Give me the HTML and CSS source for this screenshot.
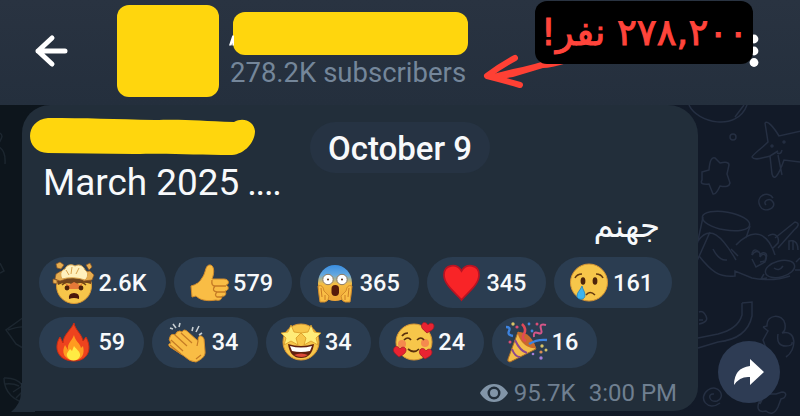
FILE: index.html
```html
<!DOCTYPE html>
<html lang="en">
<head>
    <meta charset="UTF-8" />
    <meta name="viewport" content="width=device-width, initial-scale=1" />
    <title>Channel</title>
    <link rel="stylesheet" href="styles.css">
</head>
<body>

    <header class="topbar">
        <svg class="back" viewBox="0 0 36 36"><path d="M31 18H4M18 5L4 18l14 13" /></svg>
        <div class="avatar"></div>
        <div class="channel">
            <div class="channel-name"><svg class="name-edge" viewBox="0 0 6 12"><path d="M0 12L4 0h2v12H4V9L3 12z" /></svg></div>
            <div class="subscribers">278.2K subscribers</div>
        </div>
        <svg class="menu" viewBox="0 0 10 34"><circle cx="5" cy="5" r="4.4" /><circle cx="5" cy="17" r="4.4" /><circle cx="5" cy="28.5" r="4.4" /></svg>
        <svg class="arrow" viewBox="0 0 90 36"><path class="shaft" d="M6 21L30 15Q55 10 66 5L84 9Q68 14 60 14L30 23 12 26z" /><path class="head" d="M32 4Q17 12 4 22Q20 26 37 31" /></svg>
        <div class="callout" dir="rtl" lang="fa">۲۷۸,۲۰۰ نفر!</div>
    </header>

    <main class="chat">
        <svg class="wallpaper" viewBox="0 105 800 311">
            <path d="M689 105c8 18 48 27 58 0M735 117l9-12M702 172l7-2q1-14 6-12l5 5q9-2 9 2l-2 9 3 9q-1 5-10 3-4 9-7 8l-4-10q-10 1-7-4z" />
            <circle cx="733" cy="137" r="3" />
            <path d="M765 123c2-3 8 3 14 13l22-5M765 123l3 19c-6 6-16 13-16 15 2 4 10 1 18-1l2 18c2 7 6 3 12-14l17 2M770 156l8-5M782 175l-4-20M782 150q-1 5-5 3" />
            <circle cx="772" cy="146" r="1" /><circle cx="784" cy="142" r="1" />
            <path d="M773 198c-5-8-18-2-13 8 4 8 17 2 13-4-3-5-11-1-7 3" />
            <ellipse cx="726" cy="221" rx="24" ry="9" transform="rotate(10 726 221)" />
            <path d="M703 217l-6 28M750 226l-4 12M698 241c12-17 24-5 38 19M710 232l-13 29M736 245c18-19 32-12 39 10M768 236c6-4 12 0 10 7l-5 5M775 238l20-16c6 1 2 6-1 8l-16 18M752 255c0-8 8-5 8 0 4-5 9-1 5 5M789 250v-9c8-2 9 5 9 9M793 250v-10" />
            <path d="M699 256c12 15 20 22 36 20v-5l17 7q21 4 38-2M713 249q6 12 14 11M731 249l7 7M752 255c4-6 10-3 8 2 4-6 8-1 5 5l-9 5-4-8" />
            <ellipse cx="780" cy="269" rx="15" ry="8" transform="rotate(-15 780 269)" /><path d="M774 268q5 4 9-2M764 274l-3 5 6-1M765 261l-5 1M796 262l4-4M795 270h5" />
            <path d="M699 312q4-2 7 4t-7 8M699 320h4M742 303l10-1v14q-5 23-34 26l-20 6M742 303v12q-4 14-24 19l-20 4" />
            <path d="M763 327l4-1c-1-12 16-13 18-2q1 7-3 9c15-4 15 17 4 24M763 327l5 4-5 9 3 8M778 334q-2 12 8 12 7 0 6-4M720 403c-12 9-23-5-12-13 10-7 19 7 9 11-8 2-10-8-3-7M760 404l5-10 11 0 6-2c6 0 4 6-1 7l-3 8q-5 10-12 4c-8 2-10-3-6-11z" />
            <path class="faint" d="M0 133c6 4-4 10-1 14q7 4 6 17M0 263l4 8-4 2M24 317L6 330l10 14 12 7M8 330q15-5 18-2M4 378c14-1 23 8 26 26-16-2-26-12-26-26M5 384q8-1 14 2M13 392l9-6M16 398l9-9" />
        </svg>

        <article class="bubble">
            <svg class="marker" viewBox="0 0 226 40"><path d="M18 0C55 0 85 1 125 2 155 1 170 3 204 4c9-5 20-1 21 9 0 11-10 23-23 24C165 37 145 35 104 36L18 35C-6 34-6 2 18 0z" /></svg>
            <p class="line">March 2025 <span class="dots">....</span></p>
            <p class="line-fa" dir="rtl" lang="fa">جهنم</p>

            <div class="reactions">
                <div class="reaction">
                    <svg viewBox="0 0 44 44">
                        <circle class="face" cx="22" cy="25" r="17.5" />
                        <path fill="#71451e" d="M5 20q4-5 34-2v5q-9-3-17 1-9-4-16 0z" />
                        <path fill="#e6ad50" stroke="#8b5424" stroke-width=".7" d="M4 13l5-3 5 2v6l-6 2-5-2zM31 11l7-1 4 4-2 5-9 1zM4 3l4-2 4 3-3 4-4-1zM34 4l4-2 2 4-3 3zM1 18l4 1v4l-4-1z" />
                        <path fill="#fff0bd" stroke="#d9a34d" d="M10 18c-3-6 0-9 3-10 2-5 7-5 10-3 5-3 9 1 10 4 4 2 3 8 0 10q-12-4-23-1z" />
                        <path fill="none" stroke="#d9a34d" d="M14 9l3 5M20 6l-1 7M27 7l-3 6" />
                        <path fill="#e57938" d="M13 22l4 2 5-3 6 3 3-3-3 7H16z" />
                        <circle class="dark" cx="15" cy="27" r="2.4" /><circle class="dark" cx="29" cy="27" r="2.4" />
                        <path fill="#4a170b" d="M17 38q-1-6 5-6t5 6q-5-2-10 0z" /><path fill="none" stroke="#744515" stroke-width="1.4" d="M10 24q2-2 5-3M34 24q-2-2-5-3" />
                    </svg>
                    <span>2.6K</span>
                </div>
                <div class="reaction">
                    <svg viewBox="0 0 44 44">
                        <path class="hand" d="M4 25q8-2 11-8c4-5 3-12 7-13 5-1 6 7 3 14h12c5 0 6 5 2 6 4 2 2 6-1 6 2 3 0 6-3 5 0 4-3 5-6 4-11 2-17-1-20-4L5 36z" />
                        <path fill="none" stroke="#c57b25" stroke-width="1.3" d="M25 19q-1 6 3 6h11M28 25q-4 5 2 6h8M30 31q-3 3 0 5h5" />
                    </svg>
                    <span>579</span>
                </div>
                <div class="reaction">
                    <svg viewBox="0 0 44 44">
                        <defs><linearGradient id="cold" x2="0" y2="1"><stop stop-color="#398ee1" /><stop offset=".28" stop-color="#65a8df" /><stop offset=".52" stop-color="#f5bd42" /><stop offset="1" stop-color="#efa536" /></linearGradient></defs>
                        <ellipse cx="22" cy="22" rx="17" ry="18" fill="url(#cold)" />
                        <circle fill="#fff" stroke="#8d795f" cx="15" cy="18.500" r="5.200" /><circle fill="#fff" stroke="#8d795f" cx="29" cy="18.500" r="5.200" />
                        <circle class="dark" cx="15" cy="18.500" r="1" /><circle class="dark" cx="29" cy="18.500" r="1" />
                        <rect fill="#571b0b" x="18.500" y="24" width="7.500" height="11" rx="3.700" />
                        <path class="hand" d="M5 25q5-2 6 5l5 5q0 5-4 6H7l-1-7zM39 25q-5-2-6 5l-5 5q0 5 4 6h5l1-7z" /><path fill="none" stroke="#ca7c24" d="M8 27l1 9M36 27l-1 9M12 34v5M32 34v5" />
                    </svg>
                    <span>365</span>
                </div>
                <div class="reaction">
                    <svg viewBox="0 0 44 44"><path fill="#f82427" stroke="#b91322" stroke-width="1.700" d="M21.500 39C16 32 4 24 4 14 4 3 17 2 21.500 10 26 2 39 3 39 14c0 10-12 18-17.500 25z" /></svg>
                    <span>345</span>
                </div>
                <div class="reaction">
                    <svg viewBox="0 0 44 44">
                        <circle class="face" cx="22" cy="21.500" r="18.500" />
                        <ellipse class="dark" cx="16" cy="20" rx="2.400" ry="3.800" /><ellipse class="dark" cx="28" cy="20" rx="2.400" ry="3.800" />
                        <path fill="none" stroke="#64390f" stroke-width="1.600" d="M8 17q2-4 7-4M36 17q-2-4-7-4M19 34q4-5 9 0" />
                        <path fill="#3eb4ed" stroke="#1d82bf" stroke-width=".8" d="M15 25c-2 5-5 6-5 10s8 5 8-1c0-3-2-5-3-9z" />
                    </svg>
                    <span>161</span>
                </div>
                <div class="reaction">
                    <svg viewBox="0 0 44 44">
                        <path fill="#ee431e" stroke="#c92b13" d="M22 3c1 7 8 11 9 18l3-4c7 13 1 24-12 24C6 41 1 28 8 17l3 6c0-8 8-13 11-20z" />
                        <path fill="#ff9b20" d="M22 15c1 6 6 8 7 13l2-2c2 8-1 14-9 14-10 0-13-8-9-15l3 5c-1-7 4-9 6-15z" />
                        <path fill="#ffeb43" d="M22 26c2 3 7 6 6 10-2 6-11 6-13 0-1-3 2-5 3-7l2 2z" />
                    </svg>
                    <span>59</span>
                </div>
                <div class="reaction">
                    <svg viewBox="0 0 44 44">
                        <path class="hand" d="M5 17q1-4 5-2l2-3q3-2 5 0 2-4 6 0l10 9c0-7 4-6 6-2l1 12c1 6-5 9-9 11q-6 0-12-6L5 27q-3-3 1-4-3-4-1-6z" />
                        <path fill="none" stroke="#c57b25" stroke-width="1.200" d="M10 15l12 11M6 20l12 11M5 25l11 9M16 13l11 10M33 21l-1 5M36 35l-5 4" />
                        <path fill="none" stroke="#c7ced2" stroke-width="1.600" d="M5 8l3 1M8 4l3 4M15 3l-1 4M28 7l-1 4M34 6l-3 6M37 13l-3 2" />
                    </svg>
                    <span>34</span>
                </div>
                <div class="reaction">
                    <svg viewBox="0 0 44 44">
                        <circle class="face" cx="22" cy="22" r="18" />
                        <path fill="#60200e" d="M9 24q13 4 26 0-2 14-13 14T9 24z" /><path fill="#fff" d="M11 26q11 3 22 0l-2 5q-9 2-18 0z" /><path fill="#dc4938" d="M15 35q7-3 14 0-6 4-14 0z" />
                        <path id="star" fill="#ffec78" stroke="#d89924" stroke-width=".8" d="M12 5l3 7 7 1-5 5 2 7-7-4-7 4 2-7-5-5 7-1z" /><use href="#star" x="20" />
                    </svg>
                    <span>34</span>
                </div>
                <div class="reaction">
                    <svg viewBox="0 0 44 44">
                        <circle class="face" cx="22" cy="22" r="18" />
                        <circle fill="#f58a4e" cx="10" cy="24" r="4" /><circle fill="#f58a4e" cx="33" cy="23" r="4" />
                        <path fill="none" stroke="#59300d" stroke-width="1.700" d="M12 20q4-4 7 0M25 20q4-4 7 0M16 29q6 5 11 0M10 16q2-3 6-3" />
                        <path id="love" fill="#e92331" stroke="#a51924" stroke-width=".8" d="M35 13c-3-3-7-5-5-9 2-3 5-1 6 1 2-3 6-2 6 1 0 4-4 5-7 7z" /><use href="#love" x="-28" y="24" /><use href="#love" x="-2" y="26" />
                    </svg>
                    <span>24</span>
                </div>
                <div class="reaction">
                    <svg viewBox="0 0 44 44">
                        <path fill="#f3bd49" stroke="#a86b28" d="M3 39l10-27q14 4 18 17L5 42q-3 0-2-3z" /><path fill="#c76a2c" d="M13 12q13 0 18 16-8 1-14-6-5-7-4-10z" />
                        <path fill="none" stroke="#8b478d" stroke-width="2" d="M10 20q5 11 12 13M7 29q3 8 8 8" />
                        <path fill="none" stroke="#e24957" stroke-width="2.500" d="M17 4q5 5 2 10t2 7" /><path fill="none" stroke="#3d83df" stroke-width="2.300" d="M24 24q8-5 18-4M1 7q5 0 3 4t4 5" /><path fill="none" stroke="#d45688" stroke-width="2" d="M29 17q-1-6 4-4t3-4 5-4" />
                        <g fill="#d94d75"><circle cx="12" cy="7" r="1.600" /><circle cx="32" cy="4" r="1.500" /><circle cx="5" cy="22" r="1.500" /></g><g fill="#d8c467"><circle cx="8" cy="4" r="1.700" /><circle cx="37" cy="26" r="1.700" /><circle cx="41" cy="30" r="1.500" /></g><g fill="#a47ed8"><circle cx="36" cy="38" r="1.700" /><circle cx="28" cy="34" r="1.300" /></g><g fill="#4386df"><circle cx="24" cy="4" r="1.400" /><circle cx="27" cy="11" r="1.400" /></g><circle fill="#d98f53" cx="36" cy="32" r="1.600" />
                    </svg>
                    <span>16</span>
                </div>
            </div>

            <div class="meta">
                <svg viewBox="0 0 28 20"><path fill-rule="evenodd" d="M14 1C7 1 2 6 0 10c2 4 7 9 14 9s12-5 14-9C26 6 21 1 14 1zm0 2.500a6.500 6.500 0 1 1 0 13 6.500 6.500 0 0 1 0-13z" /><circle cx="14" cy="10" r="4" /></svg>
                <span>95.7K</span>
                <time>3:00 PM</time>
            </div>
        </article>

        <svg class="tail" viewBox="0 0 24 30"><path d="M10 0h14v29H0q10-8 10-20z" /></svg>
        <div class="date">October 9</div>
        <div class="share"><svg viewBox="0 0 32 28"><path d="M17 1l14 13-14 13v-8Q7 18 1 27 1 10 17 8z" /></svg></div>
    </main>

</body>
</html>
```
FILE: styles.css
```css
* {
    box-sizing: border-box;
}

body {
    margin: 0;
    height: 416px;
    overflow: hidden;
    font-family: Roboto, "DejaVu Sans", sans-serif;
    background: #121a28;
    color: #f7f9fb;
}

svg {
    display: block;
    flex: none;
}

.topbar {
    position: relative;
    display: flex;
    height: 105px;
    padding: 5px 41px 0 34px;
    background: linear-gradient(#293341, #242f3d);
}

.back {
    width: 36px;
    height: 36px;
    margin-top: 28px;
    fill: none;
    stroke: #fff;
    stroke-width: 5;
    stroke-linecap: round;
    stroke-linejoin: round;
}

.avatar {
    width: 102px;
    height: 92px;
    margin-left: 47px;
    border-radius: 12px;
    background: #ffd60d;
}

.channel {
    margin-left: 10px;
    padding-top: 7px;
}

.channel-name {
    width: 235px;
    height: 43px;
    margin-left: 4px;
    border-radius: 12px;
    background: #ffd60d;
}

.name-edge {
    position: absolute;
    left: 229px;
    top: 35px;
    width: 5px;
    height: 11px;
    fill: #fff;
}

.subscribers {
    margin: 2px 0 0 1px;
    font-size: 27.5px;
    line-height: 32px;
    white-space: nowrap;
    color: #74869a;
}

.menu {
    width: 10px;
    height: 34px;
    margin: 29px 0 0 auto;
    fill: #fff;
}

.arrow {
    position: absolute;
    left: 483px;
    top: 54px;
    width: 90px;
    height: 36px;
}

.shaft {
    fill: #ff4034;
}

.head {
    fill: none;
    stroke: #ff4034;
    stroke-width: 6;
    stroke-linecap: round;
    stroke-linejoin: round;
}

.callout {
    position: absolute;
    left: 535px;
    top: 1px;
    width: 218px;
    height: 63px;
    padding-right: 5px;
    border-radius: 12px;
    font: 37px/64px "DejaVu Sans", sans-serif;
    white-space: nowrap;
    background: #000;
    color: #ff443b;
    -webkit-text-stroke: 1px #ff443b;
}

.chat {
    position: relative;
    height: 311px;
    background: linear-gradient(90deg, #0d151c 22px, #121a28 698px);
}

.wallpaper {
    position: absolute;
    width: 800px;
    height: 311px;
    fill: none;
    stroke: #252f42;
    stroke-width: 1.5;
}

.faint {
    stroke: #1c262f;
}

.bubble {
    position: relative;
    display: flex;
    flex-direction: column;
    width: 676px;
    height: 306px;
    margin-left: 22px;
    padding: 13px 16px 0 17px;
    border-radius: 28px 30px 24px 8px;
    background: #222e3a;
}

.marker {
    width: 226px;
    height: 40px;
    margin-left: -9px;
    fill: #ffd60d;
}

.line {
    margin: 3px 0 0 4px;
    font-size: 36.9px;
    line-height: 44px;
}

.dots {
    margin-left: -1px;
    letter-spacing: -1.4px;
}

.line-fa {
    height: 47px;
    margin: 0 20px 0 0;
    padding-right: 2px;
    font: 32.5px/43px "DejaVu Sans", sans-serif;
}

.reactions {
    display: flex;
    flex-wrap: wrap;
    gap: 8.5px 8px;
    margin-top: 5px;
}

.reaction {
    display: flex;
    align-items: center;
    height: 51px;
    padding: 0 19.2px 0 13px;
    border-radius: 26px;
    font-size: 23.5px;
    font-weight: 500;
    background: #2b3d51;
}

.reaction svg {
    width: 44px;
    height: 44px;
    margin-right: 2.4px;
}

.face {
    fill: #f7c64a;
    stroke: #d79432;
}

.dark {
    fill: #4d240b;
}

.hand {
    fill: #f9bd45;
    stroke: #d18b2b;
}

.meta {
    display: flex;
    align-items: center;
    margin: 10px 5px 0 0;
    justify-content: flex-end;
    font-size: 24px;
    line-height: 30px;
    color: #6f7f90;
}

.meta svg {
    width: 28px;
    height: 20px;
    margin-right: 6px;
    fill: #8295a8;
}

.meta time {
    margin-left: 13px;
}

.tail {
    position: absolute;
    left: 11px;
    top: 278px;
    width: 24px;
    height: 30px;
    fill: #222e3a;
}

.date {
    position: absolute;
    left: 310px;
    top: 17px;
    width: 180px;
    height: 51px;
    border-radius: 26px;
    font-size: 33px;
    font-weight: 500;
    line-height: 53px;
    text-align: center;
    white-space: nowrap;
    background: #263343;
}

.share {
    position: absolute;
    left: 718px;
    top: 236px;
    display: flex;
    align-items: center;
    justify-content: center;
    width: 62px;
    height: 62px;
    border-radius: 50%;
    background: #2e3c54;
}

.share svg {
    width: 32px;
    height: 28px;
    fill: #fff;
}
```
